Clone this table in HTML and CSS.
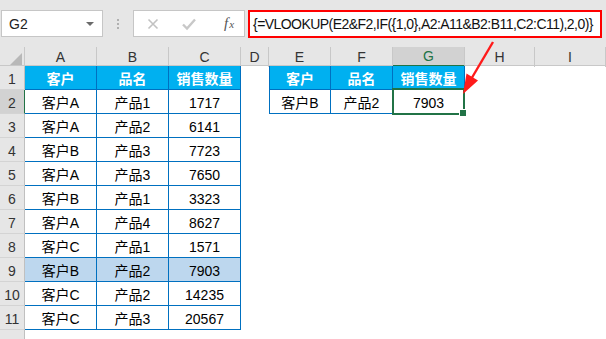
FILE: index.html
```html
<!DOCTYPE html>
<html lang="zh">
<head>
<meta charset="utf-8">
<title>VLOOKUP</title>
<link rel="stylesheet" href="styles.css">
</head>
<body>
<div class="app">
  <div class="toolbar">
    <div class="namebox"><span class="name">G2</span><span class="caret"></span></div>
    <div class="dots"><i></i><i></i><i></i></div>
    <div class="fxbox">
      <svg class="ico" width="14" height="14" viewBox="0 0 14 14"><path d="M2.5 2.5 L11.5 11.5 M11.5 2.5 L2.5 11.5" stroke="#c2c2c2" stroke-width="1.6" fill="none"/></svg>
      <svg class="ico" width="16" height="14" viewBox="0 0 16 14"><path d="M2 7.5 L6 11.5 L14 2.5" stroke="#c8c8c8" stroke-width="2.4" fill="none"/></svg>
      <span class="fx">f<sub>x</sub></span>
    </div>
    <div class="formula">{=VLOOKUP(E2&amp;F2,IF({1,0},A2:A11&amp;B2:B11,C2:C11),2,0)}</div>
  </div>

  <div class="sheet">
    <div class="row colhdr">
      <div class="corner"><span class="tri"></span></div>
      <div class="ch">A</div><div class="ch">B</div><div class="ch">C</div><div class="ch">D</div>
      <div class="ch">E</div><div class="ch">F</div><div class="ch ch-sel">G</div><div class="ch">H</div><div class="ch">I</div>
    </div>

    <div class="row">
      <div class="rh">1</div>
      <div class="c th">客户</div><div class="c th">品名</div><div class="c th">销售数量</div>
      <div class="gap"></div>
      <div class="c th first">客户</div><div class="c th">品名</div><div class="c th">销售数量</div>
    </div>
    <div class="row">
      <div class="rh rh-sel">2</div>
      <div class="c">客户A</div><div class="c">产品1</div><div class="c">1717</div>
      <div class="gap"></div>
      <div class="c first">客户B</div><div class="c">产品2</div><div class="c sel">7903</div>
    </div>
    <div class="row">
      <div class="rh">3</div>
      <div class="c">客户A</div><div class="c">产品2</div><div class="c">6141</div>
    </div>
    <div class="row">
      <div class="rh">4</div>
      <div class="c">客户B</div><div class="c">产品3</div><div class="c">7723</div>
    </div>
    <div class="row">
      <div class="rh">5</div>
      <div class="c">客户A</div><div class="c">产品3</div><div class="c">7650</div>
    </div>
    <div class="row">
      <div class="rh">6</div>
      <div class="c">客户B</div><div class="c">产品1</div><div class="c">3323</div>
    </div>
    <div class="row">
      <div class="rh">7</div>
      <div class="c">客户A</div><div class="c">产品4</div><div class="c">8627</div>
    </div>
    <div class="row">
      <div class="rh">8</div>
      <div class="c">客户C</div><div class="c">产品1</div><div class="c">1571</div>
    </div>
    <div class="row hl">
      <div class="rh">9</div>
      <div class="c">客户B</div><div class="c">产品2</div><div class="c">7903</div>
    </div>
    <div class="row">
      <div class="rh">10</div>
      <div class="c">客户C</div><div class="c">产品2</div><div class="c">14235</div>
    </div>
    <div class="row">
      <div class="rh">11</div>
      <div class="c">客户C</div><div class="c">产品3</div><div class="c">20567</div>
    </div>
    <div class="row filler">
      <div class="rh"></div>
    </div>
  </div>

  <svg class="arrow" width="606" height="339" viewBox="0 0 606 339">
    <line x1="493" y1="42" x2="470" y2="81" stroke="#ff1a1a" stroke-width="2.4"/>
    <polygon points="463,94 466.5,73.5 478,80.5" fill="#ff1a1a"/>
  </svg>
</div>
</body>
</html>
```

FILE: styles.css
```css
* { box-sizing: border-box; }
html, body { margin: 0; padding: 0; background: #ffffff; }
body {
  width: 606px;
  height: 339px;
  overflow: hidden;
  font-family: "Liberation Sans", "Noto Sans CJK SC", sans-serif;
  font-size: 14px;
  color: #000;
}
.app { position: relative; width: 606px; height: 339px; }

/* toolbar / formula bar */
.toolbar {
  height: 47px;
  background: #e6e6e6;
  display: flex;
  align-items: flex-start;
  padding-top: 10px;
}
.namebox {
  margin-left: 1px;
  width: 102px;
  height: 27px;
  background: #fff;
  border: 1px solid #c6c6c6;
  display: flex;
  align-items: center;
  justify-content: space-between;
  padding: 0 8px 0 7px;
}
.name { font-size: 14px; color: #222; }
.caret {
  width: 0; height: 0;
  border-left: 4px solid transparent;
  border-right: 4px solid transparent;
  border-top: 4px solid #6a6a6a;
}
.dots {
  margin-left: 14px;
  width: 3px;
  height: 27px;
  display: flex;
  flex-direction: column;
  justify-content: center;
  gap: 2px;
}
.dots i { display: block; width: 2px; height: 2px; background: #b0b0b0; }
.fxbox {
  margin-left: 13px;
  width: 112px;
  height: 27px;
  background: #fff;
  border: 1px solid #c6c6c6;
  display: flex;
  align-items: center;
  padding-left: 12px;
  gap: 21px;
}
.fx {
  font-family: "Liberation Serif", serif;
  font-style: italic;
  font-size: 15px;
  color: #555;
  margin-left: 6px;
}
.fx sub { font-size: 11px; vertical-align: 0; margin-left: 1px; }
.formula {
  margin-left: 3px;
  width: 354px;
  height: 28px;
  background: #fff;
  border: 2px solid #ff0000;
  padding: 0 0 0 3px;
  display: flex;
  align-items: center;
  font-size: 14px;
  letter-spacing: -0.55px;
  color: #111;
  white-space: nowrap;
  overflow: hidden;
}

/* sheet */
.sheet { height: 292px; display: flex; flex-direction: column; }
.row {
  display: grid;
  grid-template-columns: 25px 72px 72px 72px 28px 62px 62px 72px 70px 1fr;
  height: 24px;
}
.colhdr { height: 19px; background: #e6e6e6; border-bottom: 1px solid #c8c8c8; }
.filler { flex: 1; height: auto; }
.corner { border-right: 1px solid #c8c8c8; position: relative; }
.tri {
  position: absolute;
  right: 2px;
  bottom: 2px;
  width: 0; height: 0;
  border-left: 12px solid transparent;
  border-bottom: 12px solid #b8b8b8;
}
.ch {
  border-right: 1px solid #c8c8c8;
  display: flex;
  align-items: center;
  justify-content: center;
  color: #333;
  font-size: 14px;
  line-height: 18px;
}
.ch-sel { background: #d2d2d2; color: #217346; border-bottom: 2px solid #217346; }

.rh {
  background: #e6e6e6;
  border-right: 1px solid #c0c0c0;
  border-bottom: 1px solid #d4d4d4;
  display: flex;
  align-items: flex-end;
  justify-content: center;
  color: #333;
  font-size: 14px;
  line-height: 20px;
}
.filler .rh { border-bottom: none; }
.rh-sel { background: #d2d2d2; border-right-color: #217346; }

.c {
  border-right: 1px solid #0070c0;
  border-bottom: 1px solid #0070c0;
  display: flex;
  align-items: center;
  justify-content: center;
  padding-top: 2px;
  line-height: 20px;
  white-space: nowrap;
}
.c.first { border-left: 1px solid #0070c0; }
.th { background: #00b0f0; color: #fff; font-weight: bold; }
.hl .c { background: #bdd7ee; }
.sel { position: relative; }
.sel::after {
  content: "";
  position: absolute;
  top: -2px; left: -1px; right: -1px; bottom: -2px;
  border: 2px solid #217346;
}
.sel::before {
  content: "";
  position: absolute;
  right: -3px; bottom: -4px;
  width: 6px; height: 6px;
  background: #217346;
  border: 1px solid #fff;
  z-index: 1;
}

.arrow { position: absolute; left: 0; top: 0; pointer-events: none; }
```
